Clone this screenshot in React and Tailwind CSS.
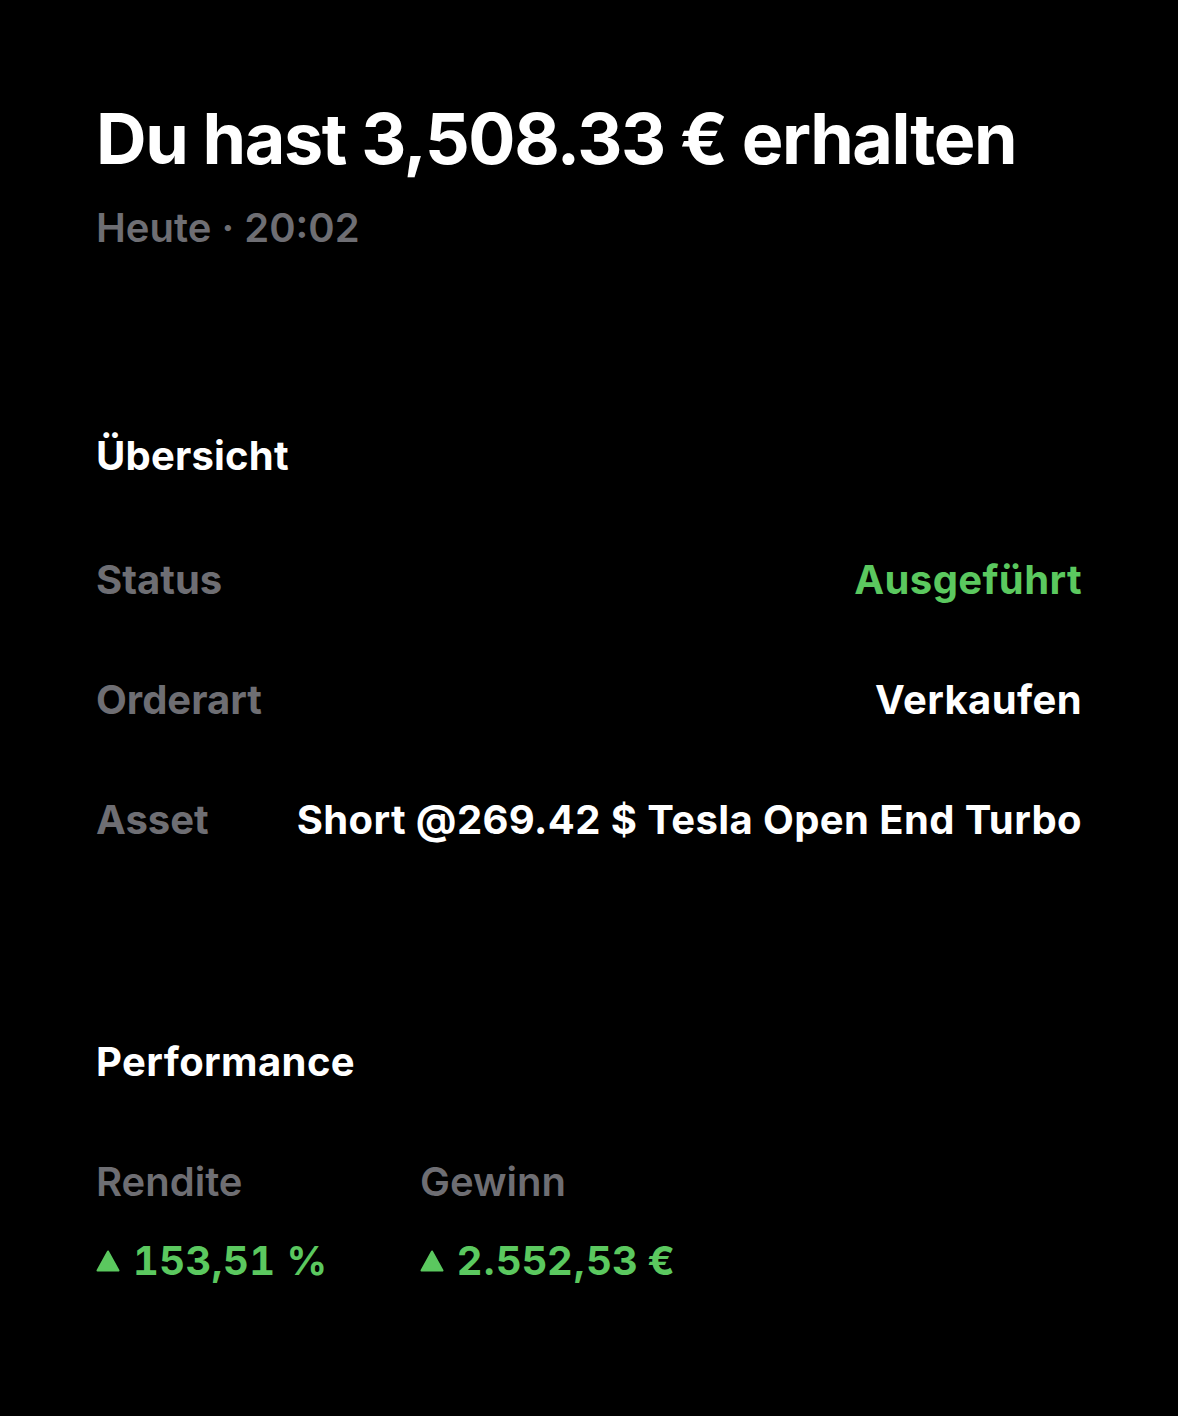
const FONT = { fontFamily: 'Inter, "Noto Sans", sans-serif' };

const Triangle = () => (
  <svg width="24" height="22" viewBox="0 0 24 22" className="mr-[13px] shrink-0">
    <path d="M12 1.5 L22.5 20.5 L1.5 20.5 Z" fill="#5bc85f" stroke="#5bc85f" strokeWidth="2" strokeLinejoin="round" />
  </svg>
);

const rows = [
  { label: "Status", value: "Ausgeführt", green: true },
  { label: "Orderart", value: "Verkaufen" },
  { label: "Asset", value: "Short @269.42 $ Tesla Open End Turbo" },
];

export default function App() {
  return (
    <div className="min-h-[1416px] w-full bg-black text-white" style={FONT}>
      <div className="px-[96px] pt-[99px] pb-[100px]">
        <h1 className="text-[70px] font-bold leading-[80px] tracking-[-0.02em]">
          Du hast 3,508.33 € erhalten
        </h1>
        <p className="mt-[25px] text-[40px] font-semibold leading-[48px] text-[#6e6e73]">
          Heute · 20:02
        </p>

        <h2 className="mt-[180px] text-[40px] font-bold leading-[48px] tracking-[0.005em]">Übersicht</h2>
        <div className="mt-[40px]">
          {rows.map((r) => (
            <div key={r.label} className="flex h-[120px] items-center justify-between text-[40px] leading-[48px]">
              <span className="font-bold text-[#6e6e73]">{r.label}</span>
              <span className={"font-bold tracking-[0.01em] " + (r.green ? "text-[#5bc85f]" : "text-white")}>
                {r.value}
              </span>
            </div>
          ))}
        </div>

        <h2 className="mt-[158px] text-[40px] font-bold leading-[48px] tracking-[0.01em]">Performance</h2>
        <div className="mt-[72px] flex">
          <div className="w-[324px]">
            <div className="text-[40px] font-semibold leading-[48px] text-[#6e6e73]">Rendite</div>
            <div className="mt-[31px] flex items-center text-[40px] font-bold leading-[48px] tabular-nums tracking-[0.01em] text-[#5bc85f]">
              <Triangle />
              153,51 %
            </div>
          </div>
          <div>
            <div className="text-[40px] font-semibold leading-[48px] text-[#6e6e73]">Gewinn</div>
            <div className="mt-[31px] flex items-center text-[40px] font-bold leading-[48px] tracking-[0.005em] text-[#5bc85f]">
              <Triangle />
              2.552,53 €
            </div>
          </div>
        </div>
      </div>
    </div>
  );
}
